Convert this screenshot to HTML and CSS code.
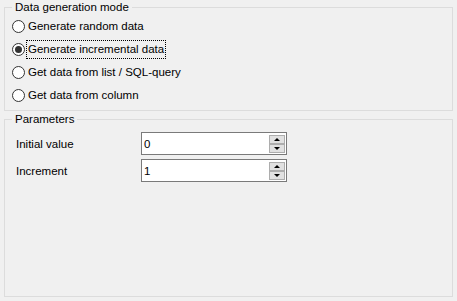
FILE: index.html
```html
<!DOCTYPE html>
<html>
<head>
<meta charset="utf-8">
<link rel="stylesheet" href="styles.css">
</head>
<body>
<fieldset class="group mode">
  <legend>Data generation mode</legend>
  <div class="radio-row"><span class="radio"></span><span class="rlabel">Generate random data</span></div>
  <div class="radio-row"><span class="radio checked"></span><span class="rlabel focus">Generate incremental data</span></div>
  <div class="radio-row"><span class="radio"></span><span class="rlabel">Get data from list / SQL-query</span></div>
  <div class="radio-row"><span class="radio"></span><span class="rlabel">Get data from column</span></div>
</fieldset>
<fieldset class="group params">
  <legend>Parameters</legend>
  <div class="field-row">
    <span class="flabel">Initial value</span>
    <div class="spin"><span class="value">0</span><div class="btns"><span class="btn up"></span><span class="btn down"></span></div></div>
  </div>
  <div class="field-row">
    <span class="flabel">Increment</span>
    <div class="spin"><span class="value">1</span><div class="btns"><span class="btn up"></span><span class="btn down"></span></div></div>
  </div>
</fieldset>
</body>
</html>
```
FILE: styles.css
```css
html, body {
  margin: 0;
  padding: 0;
  background: #f0f0f0;
  width: 457px;
  height: 301px;
  overflow: hidden;
}
body {
  font-family: "Liberation Sans", Arial, sans-serif;
  font-size: 11.5px;
  color: #000;
}
.group {
  margin: 0 4px 0 4px;
  width: 449px;
  box-sizing: border-box;
  border: 1px solid #dcdcdc;
  padding: 0 0 0 7px;
  min-width: 0;
}
.group legend {
  padding: 0 3px;
  margin-left: 0;
  line-height: 14px;
  height: 14px;
}
.mode {
  height: 111px;
}
.params {
  margin-top: 1px;
  height: 185px;
  padding-left: 11px;
  padding-top: 6px;
}
.params legend {
  margin-left: -4px;
}
.radio-row {
  display: flex;
  align-items: center;
  height: 23px;
}
.radio-row:first-of-type {
  margin-top: 0.5px;
}
.radio {
  width: 13px;
  height: 13px;
  box-sizing: border-box;
  border: 1px solid #333;
  border-radius: 50%;
  background: #fff;
  margin-right: 1px;
  display: flex;
  align-items: center;
  justify-content: center;
}
.radio.checked::after {
  content: "";
  width: 7px;
  height: 7px;
  border-radius: 50%;
  background: #333;
}
.rlabel {
  padding: 1px 1px;
  line-height: 15px;
  border: 1px dotted transparent;
}
.rlabel.focus {
  border-color: #000;
}
.field-row {
  display: flex;
  align-items: center;
  height: 23px;
  margin-bottom: 4px;
}
.flabel {
  width: 125px;
}
.spin {
  width: 146px;
  height: 23px;
  box-sizing: border-box;
  border: 1px solid #7a7a7a;
  background: #fff;
  display: flex;
  align-items: center;
  justify-content: space-between;
  padding: 0 1px 0 2px;
}
.btns {
  display: flex;
  flex-direction: column;
  width: 16px;
}
.btn {
  height: 9px;
  box-sizing: border-box;
  border: 1px solid #adadad;
  background: #e1e1e1;
  display: flex;
  align-items: center;
  justify-content: center;
}
.btn.up::after {
  content: "";
  border-left: 3px solid transparent;
  border-right: 3px solid transparent;
  border-bottom: 3px solid #000;
}
.btn.down::after {
  content: "";
  border-left: 3px solid transparent;
  border-right: 3px solid transparent;
  border-top: 3px solid #000;
}
```
